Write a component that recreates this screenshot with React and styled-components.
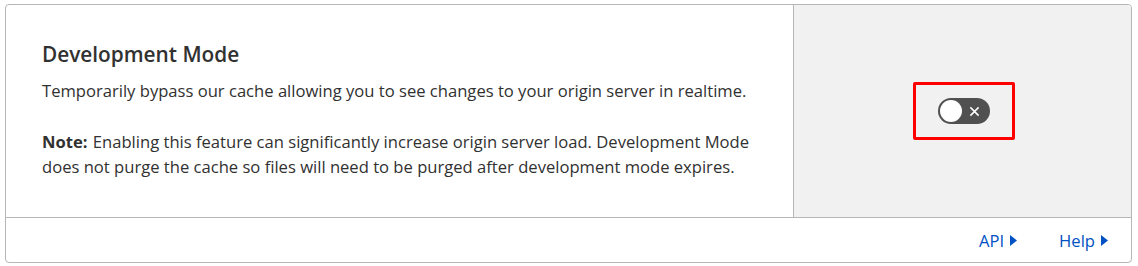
import styled, { createGlobalStyle } from 'styled-components';

const GlobalStyle = createGlobalStyle`
  body {
    margin: 0;
    background: #fff;
    font-family: "Open Sans", "Noto Sans", sans-serif;
    color: #313131;
  }
`;

const links = ['API', 'Help'];

const App = () => {
  return (
    <>
      <GlobalStyle />
      <Page>
        <Card>
          <Body>
            <Content>
              <Title>Development Mode</Title>
              <Text>
                Temporarily bypass our cache allowing you to see changes to
                your origin server in realtime.
              </Text>
              <Note>
                <strong>Note:</strong> Enabling this feature can significantly
                increase origin server load. Development Mode does not purge
                the cache so files will need to be purged after development
                mode expires.
              </Note>
            </Content>
            <Control>
              <Highlight>
                <Switch aria-label="Development Mode" role="switch" aria-checked="false">
                  <Knob />
                  <Cross viewBox="0 0 12 12">
                    <path d="M1.5 1.5 L10.5 10.5 M10.5 1.5 L1.5 10.5" />
                  </Cross>
                </Switch>
              </Highlight>
            </Control>
          </Body>
          <Footer>
            {links.map((label) => (
              <FooterLink key={label} href="#">
                {label}
                <Arrow viewBox="0 0 7 11">
                  <path d="M0 0 L7 5.5 L0 11 Z" />
                </Arrow>
              </FooterLink>
            ))}
          </Footer>
        </Card>
      </Page>
    </>
  );
};
export default App;

const Page = styled.div`
  padding: 4px 6px 4px 5px;
`;

const Card = styled.section`
  width: 1127px;
  height: 259px;
  box-sizing: border-box;
  border: 1px solid #b6b6b6;
  border-radius: 4px;
  display: flex;
  flex-direction: column;
  overflow: hidden;
`;

const Body = styled.div`
  display: flex;
  height: 212px;
  border-bottom: 1px solid #b6b6b6;
`;

const Content = styled.div`
  width: 787px;
  box-sizing: border-box;
  padding: 35px 30px 0 36px;
`;

const Title = styled.h3`
  margin: 0 0 10px;
  font-size: 20.8px;
  font-weight: 600;
  line-height: 28px;
  color: #313131;
`;

const Text = styled.p`
  margin: 0 0 26px;
  font-size: 16.6px;
  line-height: 25px;
`;

const Note = styled.p`
  margin: 0;
  font-size: 16.6px;
  line-height: 25px;
  strong {
    font-weight: 700;
    margin-right: 1px;
  }
`;

const Control = styled.div`
  flex: 1;
  background: #f1f1f1;
  border-left: 1px solid #b6b6b6;
  display: flex;
  align-items: center;
  justify-content: center;
`;

const Highlight = styled.div`
  width: 102px;
  height: 58px;
  box-sizing: border-box;
  border: 3px solid #ff0000;
  border-radius: 2px;
  display: flex;
  align-items: center;
  justify-content: center;
  margin: 0 0 0 3px;
`;

const Switch = styled.div`
  width: 52px;
  height: 26px;
  box-sizing: border-box;
  border-radius: 13px;
  background: #505050;
  display: flex;
  align-items: center;
  justify-content: space-between;
  padding: 0 10px 0 2px;
`;

const Knob = styled.span`
  width: 22px;
  height: 22px;
  border-radius: 50%;
  background: #fff;
`;

const Cross = styled.svg`
  width: 11px;
  height: 11px;
  stroke: #fff;
  stroke-width: 1.6;
  fill: none;
`;

const Footer = styled.div`
  flex: 1;
  display: flex;
  align-items: center;
  justify-content: flex-end;
  gap: 42px;
  padding-right: 23px;
`;

const FooterLink = styled.a`
  display: flex;
  align-items: center;
  gap: 6px;
  color: #0051c3;
  text-decoration: none;
  font-size: 16.6px;
`;

const Arrow = styled.svg`
  width: 7px;
  height: 11px;
  fill: #0051c3;
`;
